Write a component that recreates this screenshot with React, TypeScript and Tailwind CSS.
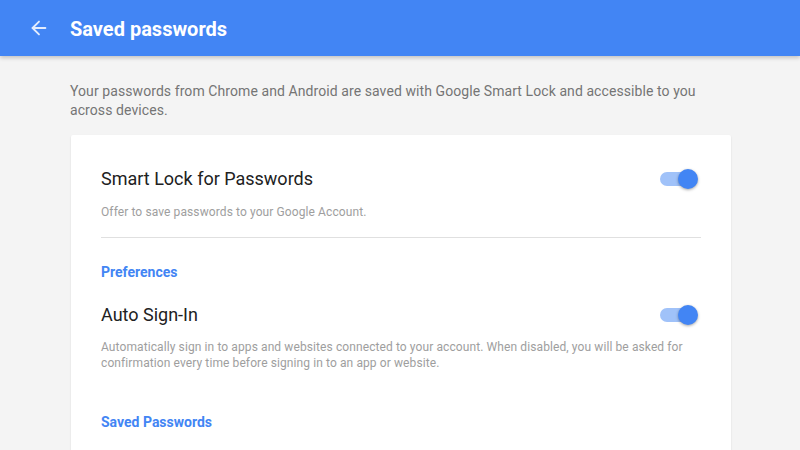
import { ArrowLeft } from "lucide-react";

function Toggle() {
  return (
    <div className="relative mr-[3px] h-5 w-[38px] shrink-0">
      <div className="absolute left-0 top-[3px] h-[14px] w-[32px] rounded-full bg-[#a0c2f9]" />
      <div className="absolute right-0 top-0 h-5 w-5 rounded-full bg-[#4285f4] shadow-[0_1px_3px_rgba(0,0,0,0.35)]" />
    </div>
  );
}

export default function App() {
  return (
    <div
      className="h-[450px] w-[800px] overflow-hidden bg-[#f4f4f4]"
      style={{ fontFamily: "Roboto, 'Liberation Sans', sans-serif" }}
    >
      <header className="flex h-[56px] items-center bg-[#4285f4] shadow-[0_2px_4px_rgba(0,0,0,0.2)]">
        <ArrowLeft className="ml-[28px] text-[#e3ecfd]" size={22} strokeWidth={2} />
        <h1 className="ml-[20px] mt-[2px] text-[20px] font-bold text-white">Saved passwords</h1>
      </header>

      <main className="mx-auto w-[660px] pt-[26px]">
        <p className="text-[14px] leading-[19px] tracking-[0.08px] text-[#757575]">
          Your passwords from Chrome and Android are saved with Google Smart Lock and accessible to you
          across devices.
        </p>

        <section className="mt-[15px] ml-px -mr-px rounded-[2px] bg-white px-[30px] pt-[32px] pb-8 shadow-[0_1px_2px_rgba(0,0,0,0.12)]">
          <div className="flex items-center justify-between">
            <h2 className="text-[18px] leading-6 text-[#212121]">Smart Lock for Passwords</h2>
            <Toggle />
          </div>
          <p className="mt-[13px] text-[12px] leading-4 tracking-[0.1px] text-[#9e9e9e]">
            Offer to save passwords to your Google Account.
          </p>
          <div className="mt-[17px] h-px bg-[#e0e0e0]" />

          <h3 className="mt-[24px] text-[14px] leading-5 font-bold text-[#4285f4]">Preferences</h3>
          <div className="mt-[21px] flex items-center justify-between">
            <h2 className="text-[18px] leading-6 text-[#212121]">Auto Sign-In</h2>
            <Toggle />
          </div>
          <p className="mt-[12px] text-[12px] leading-4 tracking-[0.1px] text-[#9e9e9e]">
            Automatically sign in to apps and websites connected to your account. When disabled, you will be asked for
            confirmation every time before signing in to an app or website.
          </p>

          <h3 className="mt-[41px] text-[14px] leading-5 font-bold text-[#4285f4]">Saved Passwords</h3>
        </section>
      </main>
    </div>
  );
}
